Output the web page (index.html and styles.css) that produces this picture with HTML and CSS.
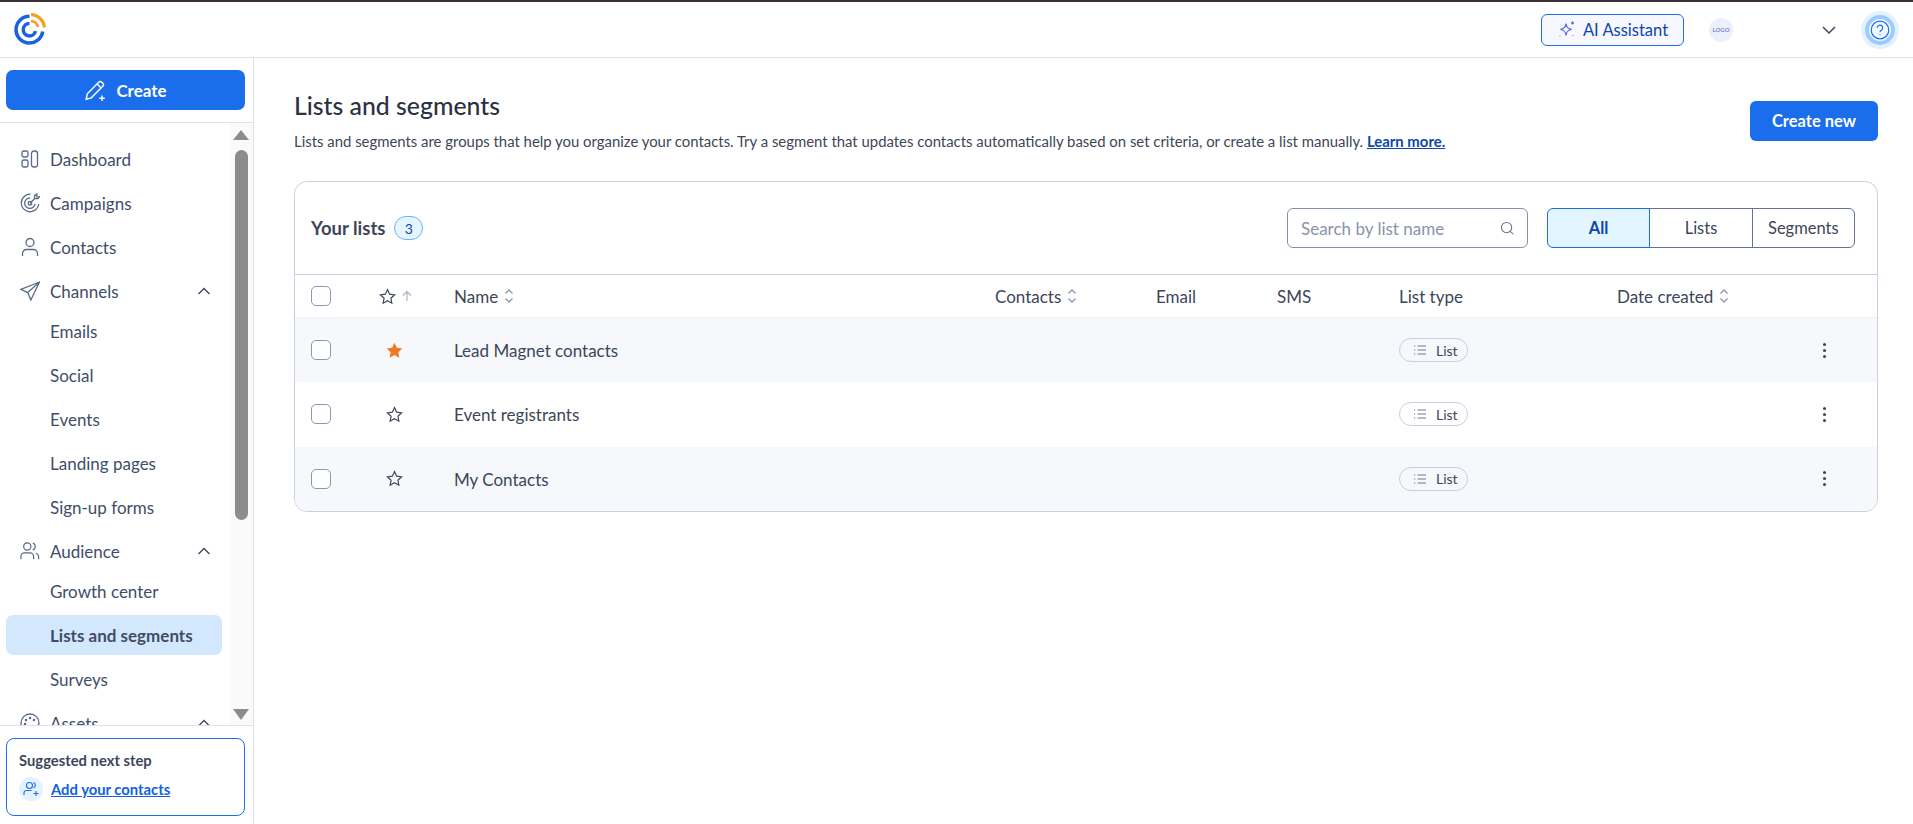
FILE: index.html
```html
<!DOCTYPE html>
<html lang="en">
<head>
  <meta charset="UTF-8" />
  <meta name="viewport" content="width=device-width, initial-scale=1.0"/>
  <title>Lists and segments</title>
  <link rel="stylesheet" href="styles.css">
</head>
<body>

<!-- Top bar -->
<header class="topbar">
  <svg class="logo" viewBox="0 0 32 32" fill="none" stroke-width="3.4">
    <path d="M16 3.200A13 13 0 1 0 28.800 18" stroke="#1a62dc"/>
    <path d="M16 10.200A6 6 0 1 0 21.800 17.500" stroke="#1a62dc"/>
    <path d="M17.500 1.600A13.500 13.500 0 0 1 30.500 14" stroke="#f99d1c" stroke-width="3"/>
    <path d="M17.500 7.800A7 7 0 0 1 24.200 13.500" stroke="#f99d1c" stroke-width="2.600"/>
  </svg>
  <div class="topbar-right">
    <button class="ai-button">
      <svg class="ai-icon" viewBox="0 0 20 20" fill="none" stroke="#5b6fe0" stroke-width="1.300">
        <path d="M9 3.500c.6 4 1.800 5.200 5.500 5.800-3.700.7-4.900 2-5.500 6-.6-4-1.800-5.300-5.500-6 3.700-.6 4.900-1.800 5.500-5.800z"/>
        <path d="M15.500 1.500v3M14 3h3M3 15.500v.8M16 15v.8"/>
      </svg>
      AI Assistant
    </button>
    <div class="account-logo">LOGO</div>
    <svg class="account-chevron" viewBox="0 0 16 10" fill="none" stroke="#3d4659" stroke-width="1.500"><path d="M2 2l6 6 6-6"/></svg>
    <div class="help-ring">
      <div class="help-inner">
        <svg viewBox="0 0 20 20" fill="none" stroke="#1a6eeb" stroke-width="1.200">
          <circle cx="10" cy="10" r="8.800"/>
          <path d="M7.300 7.800a2.700 2.700 0 1 1 4.200 2.200c-.9.600-1.500 1.100-1.500 2.200"/>
          <path d="M10 14.200v1"/>
        </svg>
      </div>
    </div>
  </div>
</header>

<div class="layout">

  <!-- Sidebar -->
  <aside class="sidebar">
    <div class="create-wrap">
      <button class="create-button">
        <svg viewBox="0 0 22 22" fill="none" stroke="#fff" stroke-width="1.300">
          <path d="M2 19.500l1-5L13.500 3.800c.8-.8 2-.8 2.800 0l.9.9c.8.8.8 2 0 2.800L6.700 18.200z"/>
          <path d="M12 5.500l3.700 3.700M16.500 16v5M14 18.500h5"/>
        </svg>
        Create
      </button>
    </div>

    <div class="nav-wrap">
      <nav class="nav">
        <a class="nav-item">
          <svg class="nav-icon" viewBox="0 0 20 20" fill="none" stroke="#5a6a88" stroke-width="1.300">
            <rect x="2" y="2" width="6" height="6" rx="1.800"/><rect x="2" y="11" width="6" height="7" rx="1.800"/><rect x="11.500" y="2" width="6" height="16" rx="2.500"/>
          </svg>
          Dashboard
        </a>
        <a class="nav-item gap">
          <svg class="nav-icon" viewBox="0 0 20 20" fill="none" stroke="#5a6a88" stroke-width="1.300">
            <path d="M10.500 1.200a8.800 8.800 0 1 0 8.300 9.800"/><path d="M10 5a5.200 5.200 0 1 0 5 5.800"/><circle cx="10" cy="10.200" r="1.800"/><path d="M10 10.200l5.500-5.500M14.500 2.700v3h3.500l1.500-1.800h-2.700V1z"/>
          </svg>
          Campaigns
        </a>
        <a class="nav-item gap">
          <svg class="nav-icon" viewBox="0 0 20 20" fill="none" stroke="#5a6a88" stroke-width="1.300">
            <circle cx="10" cy="5.500" r="4"/><path d="M2.500 19v-2.500a4 4 0 0 1 4-4h7a4 4 0 0 1 4 4V19"/>
          </svg>
          Contacts
        </a>
        <a class="nav-item gap">
          <svg class="nav-icon" viewBox="0 0 20 20" fill="none" stroke="#5a6a88" stroke-width="1.300">
            <path d="M19.500 1L.8 8.300l7 3.300 3 7.400zM7.800 11.600L19.500 1"/>
          </svg>
          Channels
          <svg class="nav-chevron" viewBox="0 0 14 8" fill="none" stroke="#3d4659" stroke-width="1.300"><path d="M1.500 7L7 1.500 12.500 7"/></svg>
        </a>
        <a class="nav-item">Emails</a>
        <a class="nav-item gap">Social</a>
        <a class="nav-item gap">Events</a>
        <a class="nav-item gap">Landing pages</a>
        <a class="nav-item gap">Sign-up forms</a>
        <a class="nav-item gap">
          <svg class="nav-icon" viewBox="0 0 22 20" fill="none" stroke="#5a6a88" stroke-width="1.300">
            <circle cx="8" cy="5" r="4"/><path d="M1 19v-3a4 4 0 0 1 4-4h6a4 4 0 0 1 4 4v3"/><path d="M14 1.200a4 4 0 0 1 0 7.600M17.500 12.500a4 4 0 0 1 3 3.500v3"/>
          </svg>
          Audience
          <svg class="nav-chevron" viewBox="0 0 14 8" fill="none" stroke="#3d4659" stroke-width="1.300"><path d="M1.500 7L7 1.500 12.500 7"/></svg>
        </a>
        <a class="nav-item">Growth center</a>
        <a class="nav-item gap active">Lists and segments</a>
        <a class="nav-item gap">Surveys</a>
        <a class="nav-item gap">
          <svg class="nav-icon" viewBox="0 0 20 20" fill="none" stroke="#5a6a88" stroke-width="1.300">
            <path d="M10 1a9 9 0 1 0 0 18c2 0 2.500-1.500 1.500-3-1-1.700.3-3 2-3h2.500c2 0 3-1.300 3-3a9 9 0 0 0-9-9z"/><circle cx="6" cy="7" r=".6"/><circle cx="10" cy="5" r=".6"/><circle cx="14" cy="7" r=".6"/><circle cx="5" cy="11" r=".6"/>
          </svg>
          Assets
          <svg class="nav-chevron" viewBox="0 0 14 8" fill="none" stroke="#3d4659" stroke-width="1.300"><path d="M1.500 7L7 1.500 12.500 7"/></svg>
        </a>
      </nav>
      <div class="scrollbar">
        <div class="scroll-up"></div>
        <div class="scroll-thumb"></div>
        <div class="scroll-down"></div>
      </div>
    </div>

    <div class="next-wrap">
      <div class="next-step">
        <div class="next-title">Suggested next step</div>
        <div class="next-link-row">
          <span class="next-icon">
            <svg viewBox="0 0 16 16" fill="none" stroke="#1a6eeb" stroke-width="1.100">
              <circle cx="6.500" cy="4.500" r="3"/><path d="M1 14v-2a2.500 2.500 0 0 1 2.500-2.500h5"/><path d="M10.500 1.500a3 3 0 0 1 0 5.500M13 10v5M10.500 12.500h5"/>
            </svg>
          </span>
          <a class="next-link">Add your contacts</a>
        </div>
      </div>
    </div>
  </aside>

  <!-- Main content -->
  <main class="main">
    <div class="page-head">
      <div>
        <h1>Lists and segments</h1>
        <p class="page-desc">Lists and segments are groups that help you organize your contacts. Try a segment that updates contacts automatically based on set criteria, or create a list manually. <a class="learn-more">Learn more.</a></p>
      </div>
      <button class="create-new">Create new</button>
    </div>

    <section class="card">
      <div class="card-toolbar">
        <div class="card-title">Your lists</div>
        <span class="count-badge">3</span>
        <div class="search">
          <span class="search-text">Search by list name</span>
          <svg viewBox="0 0 16 16" fill="none" stroke="#66748f" stroke-width="1.100"><circle cx="7" cy="7" r="5.500"/><path d="M11 11l3 3"/></svg>
        </div>
        <div class="segmented">
          <div class="seg selected">All</div>
          <div class="seg">Lists</div>
          <div class="seg">Segments</div>
        </div>
      </div>

      <div class="row head-row">
        <span class="checkbox"></span>
        <div class="star-head">
          <svg class="star" viewBox="0 0 16 16" fill="none" stroke="#3d4659" stroke-width="1.100"><path d="M8 1.500l2 4.300 4.700.6-3.500 3.200.9 4.700L8 12l-4.100 2.300.9-4.700L1.300 6.400 6 5.800z"/></svg>
          <svg class="arrow" viewBox="0 0 12 12" fill="none" stroke="#a9b2c6" stroke-width="1.200"><path d="M6 11V1.500M2 5.500l4-4 4 4"/></svg>
        </div>
        <div class="col-label">Name <svg class="sort" viewBox="0 0 10 16" fill="none" stroke="#8c97b0" stroke-width="1.300"><path d="M1.500 5.500L5 2l3.500 3.500M1.500 10.500L5 14l3.500-3.500"/></svg></div>
        <div class="col-label">Contacts <svg class="sort" viewBox="0 0 10 16" fill="none" stroke="#8c97b0" stroke-width="1.300"><path d="M1.500 5.500L5 2l3.500 3.500M1.500 10.500L5 14l3.500-3.500"/></svg></div>
        <div class="col-label">Email</div>
        <div class="col-label">SMS</div>
        <div class="col-label">List type</div>
        <div class="col-label">Date created <svg class="sort" viewBox="0 0 10 16" fill="none" stroke="#8c97b0" stroke-width="1.300"><path d="M1.500 5.500L5 2l3.500 3.500M1.500 10.500L5 14l3.500-3.500"/></svg></div>
        <div></div>
      </div>

      <div class="row body-row shaded">
        <span class="checkbox"></span>
        <svg class="star-cell" viewBox="0 0 16 16" fill="#ef7a22"><path d="M8 .8l2.200 4.700 5.100.7-3.700 3.500.9 5.100L8 12.300l-4.500 2.500.9-5.100L.7 6.200l5.100-.7z"/></svg>
        <div class="name">Lead Magnet contacts</div>
        <div></div><div></div><div></div>
        <div><span class="pill"><svg viewBox="0 0 14 12" fill="none" stroke="#6d7890" stroke-width="1.100"><path d="M4.500 2H13M4.500 6H13M4.500 10H13M1 2h1.200M1 6h1.200M1 10h1.200"/></svg>List</span></div>
        <div></div>
        <div class="kebab"><i></i><i></i><i></i></div>
      </div>
      <div class="row body-row">
        <span class="checkbox"></span>
        <svg class="star-cell" viewBox="0 0 16 16" fill="none" stroke="#3d4659" stroke-width="1.100"><path d="M8 1.500l2 4.300 4.700.6-3.500 3.200.9 4.700L8 12l-4.100 2.300.9-4.700L1.300 6.400 6 5.800z"/></svg>
        <div class="name">Event registrants</div>
        <div></div><div></div><div></div>
        <div><span class="pill"><svg viewBox="0 0 14 12" fill="none" stroke="#6d7890" stroke-width="1.100"><path d="M4.500 2H13M4.500 6H13M4.500 10H13M1 2h1.200M1 6h1.200M1 10h1.200"/></svg>List</span></div>
        <div></div>
        <div class="kebab"><i></i><i></i><i></i></div>
      </div>
      <div class="row body-row shaded">
        <span class="checkbox"></span>
        <svg class="star-cell" viewBox="0 0 16 16" fill="none" stroke="#3d4659" stroke-width="1.100"><path d="M8 1.500l2 4.300 4.700.6-3.500 3.200.9 4.700L8 12l-4.100 2.300.9-4.700L1.300 6.400 6 5.800z"/></svg>
        <div class="name">My Contacts</div>
        <div></div><div></div><div></div>
        <div><span class="pill"><svg viewBox="0 0 14 12" fill="none" stroke="#6d7890" stroke-width="1.100"><path d="M4.500 2H13M4.500 6H13M4.500 10H13M1 2h1.200M1 6h1.200M1 10h1.200"/></svg>List</span></div>
        <div></div>
        <div class="kebab"><i></i><i></i><i></i></div>
      </div>
    </section>
  </main>
</div>

</body>
</html>
```
FILE: styles.css
```css
* { box-sizing: border-box; }

body, html {
  margin: 0;
  padding: 0;
  height: 100%;
  overflow: hidden;
  font-family: "Lato", "Noto Sans", sans-serif;
  background-color: #fff;
  color: #3d4659;
}

button {
  font-family: inherit;
  cursor: pointer;
}

svg { display: block; flex: none; }

/* Top bar */
.topbar {
  height: 58px;
  border-top: 2px solid #3b2f34;
  border-bottom: 1px solid #dfe2ea;
  display: flex;
  align-items: center;
  justify-content: space-between;
  padding: 0 14px 0 13px;
}

.logo {
  width: 33px;
  height: 33px;
}

.topbar-right {
  display: flex;
  align-items: center;
}

.ai-button {
  width: 143px;
  height: 32px;
  display: flex;
  align-items: center;
  justify-content: center;
  gap: 6px;
  background: #f6f7ff;
  border: 1px solid #1a6eeb;
  border-radius: 6px;
  color: #0d47a8;
  font-size: 16.500px;
}

.ai-icon {
  width: 20px;
  height: 20px;
}

.account-logo {
  width: 24px;
  height: 24px;
  margin-left: 25px;
  border-radius: 50%;
  background: #eceffc;
  color: #7b8bd0;
  font-size: 6px;
  font-weight: 700;
  display: flex;
  align-items: center;
  justify-content: center;
}

.account-chevron {
  width: 16px;
  height: 10px;
  margin-left: 88px;
}

.help-ring {
  width: 38px;
  height: 38px;
  margin-left: 24px;
  border-radius: 50%;
  background: #e3f1ff;
  display: flex;
  align-items: center;
  justify-content: center;
}

.help-inner {
  width: 30px;
  height: 30px;
  border-radius: 50%;
  background: #f2f8ff;
  border: 4px solid #9ccbff;
  display: flex;
  align-items: center;
  justify-content: center;
}

.help-inner svg {
  width: 20px;
  height: 20px;
}

.layout {
  display: flex;
  height: calc(100vh - 58px);
}

/* Sidebar */
.sidebar {
  width: 254px;
  flex: none;
  border-right: 1px solid #dfe2ea;
  display: flex;
  flex-direction: column;
}

.create-wrap {
  height: 65px;
  flex: none;
  padding: 12px 8px 0 6px;
  border-bottom: 1px solid #dfe2ea;
}

.create-button {
  width: 100%;
  height: 40px;
  display: flex;
  align-items: center;
  justify-content: center;
  gap: 8px;
  background: #1a6eeb;
  border: none;
  border-radius: 7px;
  color: #fff;
  font-size: 17px;
  font-weight: 700;
}

.create-button svg {
  width: 24px;
  height: 24px;
}

.nav-wrap {
  height: 602px;
  flex: none;
  display: flex;
  overflow: hidden;
}

.nav {
  width: 230px;
  flex: none;
  padding: 16px 8px 0 6px;
}

.nav-item {
  height: 40px;
  display: flex;
  align-items: center;
  padding-left: 44px;
  position: relative;
  border-radius: 7px;
  font-size: 17px;
  color: #414d68;
}

.nav-item.gap { margin-top: 4px; }

.nav-item.active {
  background: #d4e8fd;
  font-weight: 700;
}

.nav-icon {
  position: absolute;
  left: 14px;
  top: 10px;
  width: 20px;
  height: 20px;
}

.nav-chevron {
  position: absolute;
  right: 11px;
  top: 16px;
  width: 14px;
  height: 8px;
}

.scrollbar {
  flex: 1;
  background: #fafafa;
  display: flex;
  flex-direction: column;
  align-items: center;
  padding: 7px 1px 5px 0;
}

.scroll-up {
  width: 0;
  height: 0;
  border-left: 8px solid transparent;
  border-right: 8px solid transparent;
  border-bottom: 10px solid #8c8c8c;
}

.scroll-thumb {
  width: 13px;
  height: 370px;
  margin-top: 10px;
  background: #8c8c8c;
  border-radius: 7px;
}

.scroll-down {
  width: 0;
  height: 0;
  margin-top: auto;
  border-left: 8px solid transparent;
  border-right: 8px solid transparent;
  border-top: 11px solid #8c8c8c;
}

.next-wrap {
  flex: 1;
  padding: 12px 8px 0 6px;
  border-top: 1px solid #dfe2ea;
}

.next-step {
  height: 78px;
  padding: 12px 12px 0 12px;
  border: 1px solid #1a6eeb;
  border-radius: 8px;
}

.next-title {
  font-size: 14.800px;
  font-weight: 700;
  color: #3d4659;
}

.next-link-row {
  display: flex;
  align-items: center;
  gap: 8px;
  margin-top: 8px;
}

.next-icon {
  width: 24px;
  height: 24px;
  border-radius: 50%;
  background: #e3f3ff;
  display: flex;
  align-items: center;
  justify-content: center;
}

.next-icon svg {
  width: 16px;
  height: 16px;
}

.next-link {
  font-size: 14.800px;
  font-weight: 700;
  color: #0f62e0;
  text-decoration: underline;
}

/* Main */
.main {
  flex: 1;
  padding: 0 35px 0 40px;
}

.page-head {
  display: flex;
  align-items: flex-start;
  justify-content: space-between;
  height: 123px;
}

h1 {
  margin: 33px 0 0;
  font-size: 24.800px;
  line-height: 30px;
  font-weight: 500;
  color: #2a3142;
}

.page-desc {
  margin: 10px 0 0;
  font-size: 14.900px;
  line-height: 20px;
  color: #3d4659;
}

.learn-more {
  font-weight: 700;
  color: #0d47a8;
  text-decoration: underline;
}

.create-new {
  width: 128px;
  height: 40px;
  margin-top: 43px;
  background: #1a6eeb;
  border: none;
  border-radius: 6px;
  color: #fff;
  font-size: 16.500px;
  font-weight: 700;
}

.card {
  border: 1px solid #c8cfe0;
  border-radius: 13px;
  overflow: hidden;
}

.card-toolbar {
  height: 93px;
  display: flex;
  align-items: center;
  padding: 0 22px 0 16px;
  border-bottom: 1px solid #c8cfe0;
}

.card-title {
  font-size: 18.500px;
  font-weight: 700;
  color: #3d4659;
}

.count-badge {
  width: 29px;
  height: 24px;
  margin-left: 9px;
  border: 1px solid #6fb2fb;
  border-radius: 12px;
  background: #e5f5ff;
  color: #0d47a8;
  font-size: 14px;
  display: flex;
  align-items: center;
  justify-content: center;
}

.search {
  width: 241px;
  height: 40px;
  margin-left: auto;
  padding: 0 12px 0 13px;
  border: 1px solid #8390ac;
  border-radius: 6px;
  display: flex;
  align-items: center;
  justify-content: space-between;
}

.search svg {
  width: 15px;
  height: 15px;
}

.search-text {
  font-size: 17px;
  color: #8a93a8;
}

.segmented {
  width: 308px;
  height: 40px;
  margin-left: 19px;
  display: flex;
}

.seg {
  flex: 1;
  margin-left: -1px;
  display: flex;
  align-items: center;
  justify-content: center;
  font-size: 16.500px;
  color: #3d4659;
  border: 1px solid #66738f;
}

.seg:last-child { border-radius: 0 6px 6px 0; }

.seg.selected {
  position: relative;
  z-index: 1;
  margin-left: 0;
  background: #e3f5ff;
  color: #0d47a8;
  font-weight: 700;
  border-color: #1a6eeb;
  border-radius: 6px 0 0 6px;
}

.row {
  display: grid;
  grid-template-columns: 58px 85px 541px 161px 121px 122px 218px 190px 1fr;
  align-items: center;
  padding-left: 16px;
}

.head-row {
  height: 43px;
  border-bottom: 1px solid #f0f2f7;
}

.body-row { height: 64.300px; }
.shaded { background: #f7f8fc; }

.checkbox {
  width: 20px;
  height: 20px;
  border: 1px solid #8c97b0;
  border-radius: 5px;
  background: #fff;
}

.star-head {
  display: flex;
  align-items: center;
  gap: 5px;
  margin-left: 10px;
}

.star {
  width: 17px;
  height: 17px;
}

.arrow {
  width: 12px;
  height: 12px;
}

.star-cell {
  width: 17px;
  height: 17px;
  margin-left: 17px;
}

.col-label {
  display: flex;
  align-items: center;
  gap: 6px;
  font-size: 17px;
  color: #3d4659;
}

.sort {
  width: 10px;
  height: 16px;
}

.name {
  padding-top: 1px;
  font-size: 17px;
  color: #3d4659;
}

.pill {
  display: inline-flex;
  align-items: center;
  gap: 9px;
  width: 69px;
  height: 24px;
  padding-left: 13px;
  border: 1px solid #c8cfe0;
  border-radius: 12px;
  background: #fff;
  font-size: 14px;
  color: #3d4659;
}

.shaded .pill { background: #f7f8fc; }

.pill svg {
  width: 14px;
  height: 12px;
}

.kebab {
  display: flex;
  flex-direction: column;
  gap: 3px;
  margin-left: 16px;
}

.kebab i {
  width: 3px;
  height: 3px;
  border-radius: 50%;
  background: #3d4659;
}
```
